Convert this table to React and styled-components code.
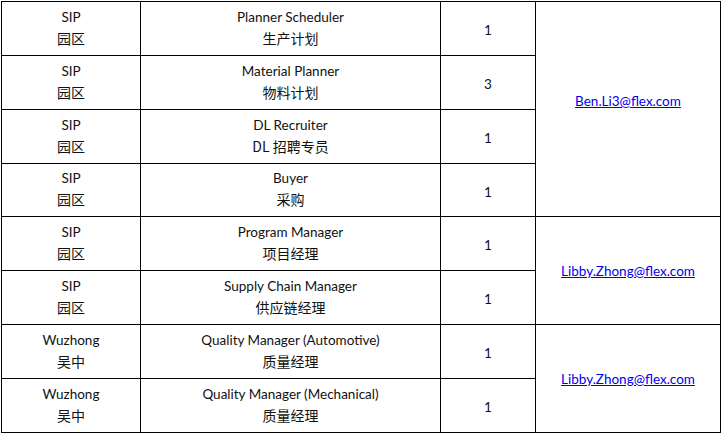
import React from "react";
import styled, { createGlobalStyle } from "styled-components";

const GlobalStyle = createGlobalStyle`
  body {
    margin: 0;
    background: #ffffff;
    font-family: Lato, "Noto Sans CJK SC", sans-serif;
    color: #111111;
  }
`;

const rows = [
  { site: "SIP", siteCn: "园区", title: "Planner Scheduler", titleCn: "生产计划", count: 1 },
  { site: "SIP", siteCn: "园区", title: "Material Planner", titleCn: "物料计划", count: 3 },
  { site: "SIP", siteCn: "园区", title: "DL Recruiter", titleCn: "DL 招聘专员", count: 1 },
  { site: "SIP", siteCn: "园区", title: "Buyer", titleCn: "采购", count: 1 },
  { site: "SIP", siteCn: "园区", title: "Program Manager", titleCn: "项目经理", count: 1 },
  { site: "SIP", siteCn: "园区", title: "Supply Chain Manager", titleCn: "供应链经理", count: 1 },
  { site: "Wuzhong", siteCn: "吴中", title: "Quality Manager (Automotive)", titleCn: "质量经理", count: 1 },
  { site: "Wuzhong", siteCn: "吴中", title: "Quality Manager (Mechanical)", titleCn: "质量经理", count: 1 },
];

// contact cells are merged over several rows
const contacts = {
  0: { email: "Ben.Li3@flex.com", span: 4, lift: true },
  4: { email: "Libby.Zhong@flex.com", span: 2 },
  6: { email: "Libby.Zhong@flex.com", span: 2 },
};

const App = () => {
  return (
    <>
      <GlobalStyle />
      <Sheet>
        {rows.map((row, i) => (
          <React.Fragment key={i}>
            <Cell $row={i + 1}>
              <Latin>{row.site}</Latin>
              <Chinese>{row.siteCn}</Chinese>
            </Cell>
            <Cell $row={i + 1}>
              <Latin>{row.title}</Latin>
              <Chinese>{row.titleCn}</Chinese>
            </Cell>
            <NumberCell $row={i + 1}>
              <Latin>{row.count}</Latin>
            </NumberCell>
            {contacts[i] && (
              <MailCell $row={i + 1} $span={contacts[i].span} $lift={contacts[i].lift}>
                <MailLink href={`mailto:${contacts[i].email}`}>
                  {contacts[i].email}
                </MailLink>
              </MailCell>
            )}
          </React.Fragment>
        ))}
      </Sheet>
    </>
  );
};

export default App;

const Sheet = styled.div`
  display: grid;
  grid-template-columns: 138px 299px 94px 184px;
  grid-template-rows: 53px 53px 53px 52px 53px 53px 53px 53px;
  gap: 1px;
  padding: 1px;
  margin: 1px 0 0 1px;
  width: fit-content;
  background: #000000;
`;

const Cell = styled.div`
  grid-row: ${(p) => p.$row};
  background: #ffffff;
  display: flex;
  flex-direction: column;
  align-items: center;
  justify-content: center;
  padding-bottom: 3px;
`;

const NumberCell = styled(Cell)`
  padding-bottom: 0;
  padding-top: 3px;
`;

const MailCell = styled(Cell)`
  grid-row: ${(p) => p.$row} / span ${(p) => p.$span};
  grid-column: 4;
  padding-bottom: ${(p) => (p.$lift ? "17px" : "0")};
`;

const Latin = styled.div`
  font-family: Lato, sans-serif;
  font-size: 13.5px;
  line-height: 22px;
`;

const Chinese = styled.div`
  font-family: "Noto Sans CJK SC", sans-serif;
  font-size: 14px;
  line-height: 21px;
`;

const MailLink = styled.a`
  font-family: Lato, sans-serif;
  font-size: 13.5px;
  color: #0000ee;
  text-decoration: underline;
`;
